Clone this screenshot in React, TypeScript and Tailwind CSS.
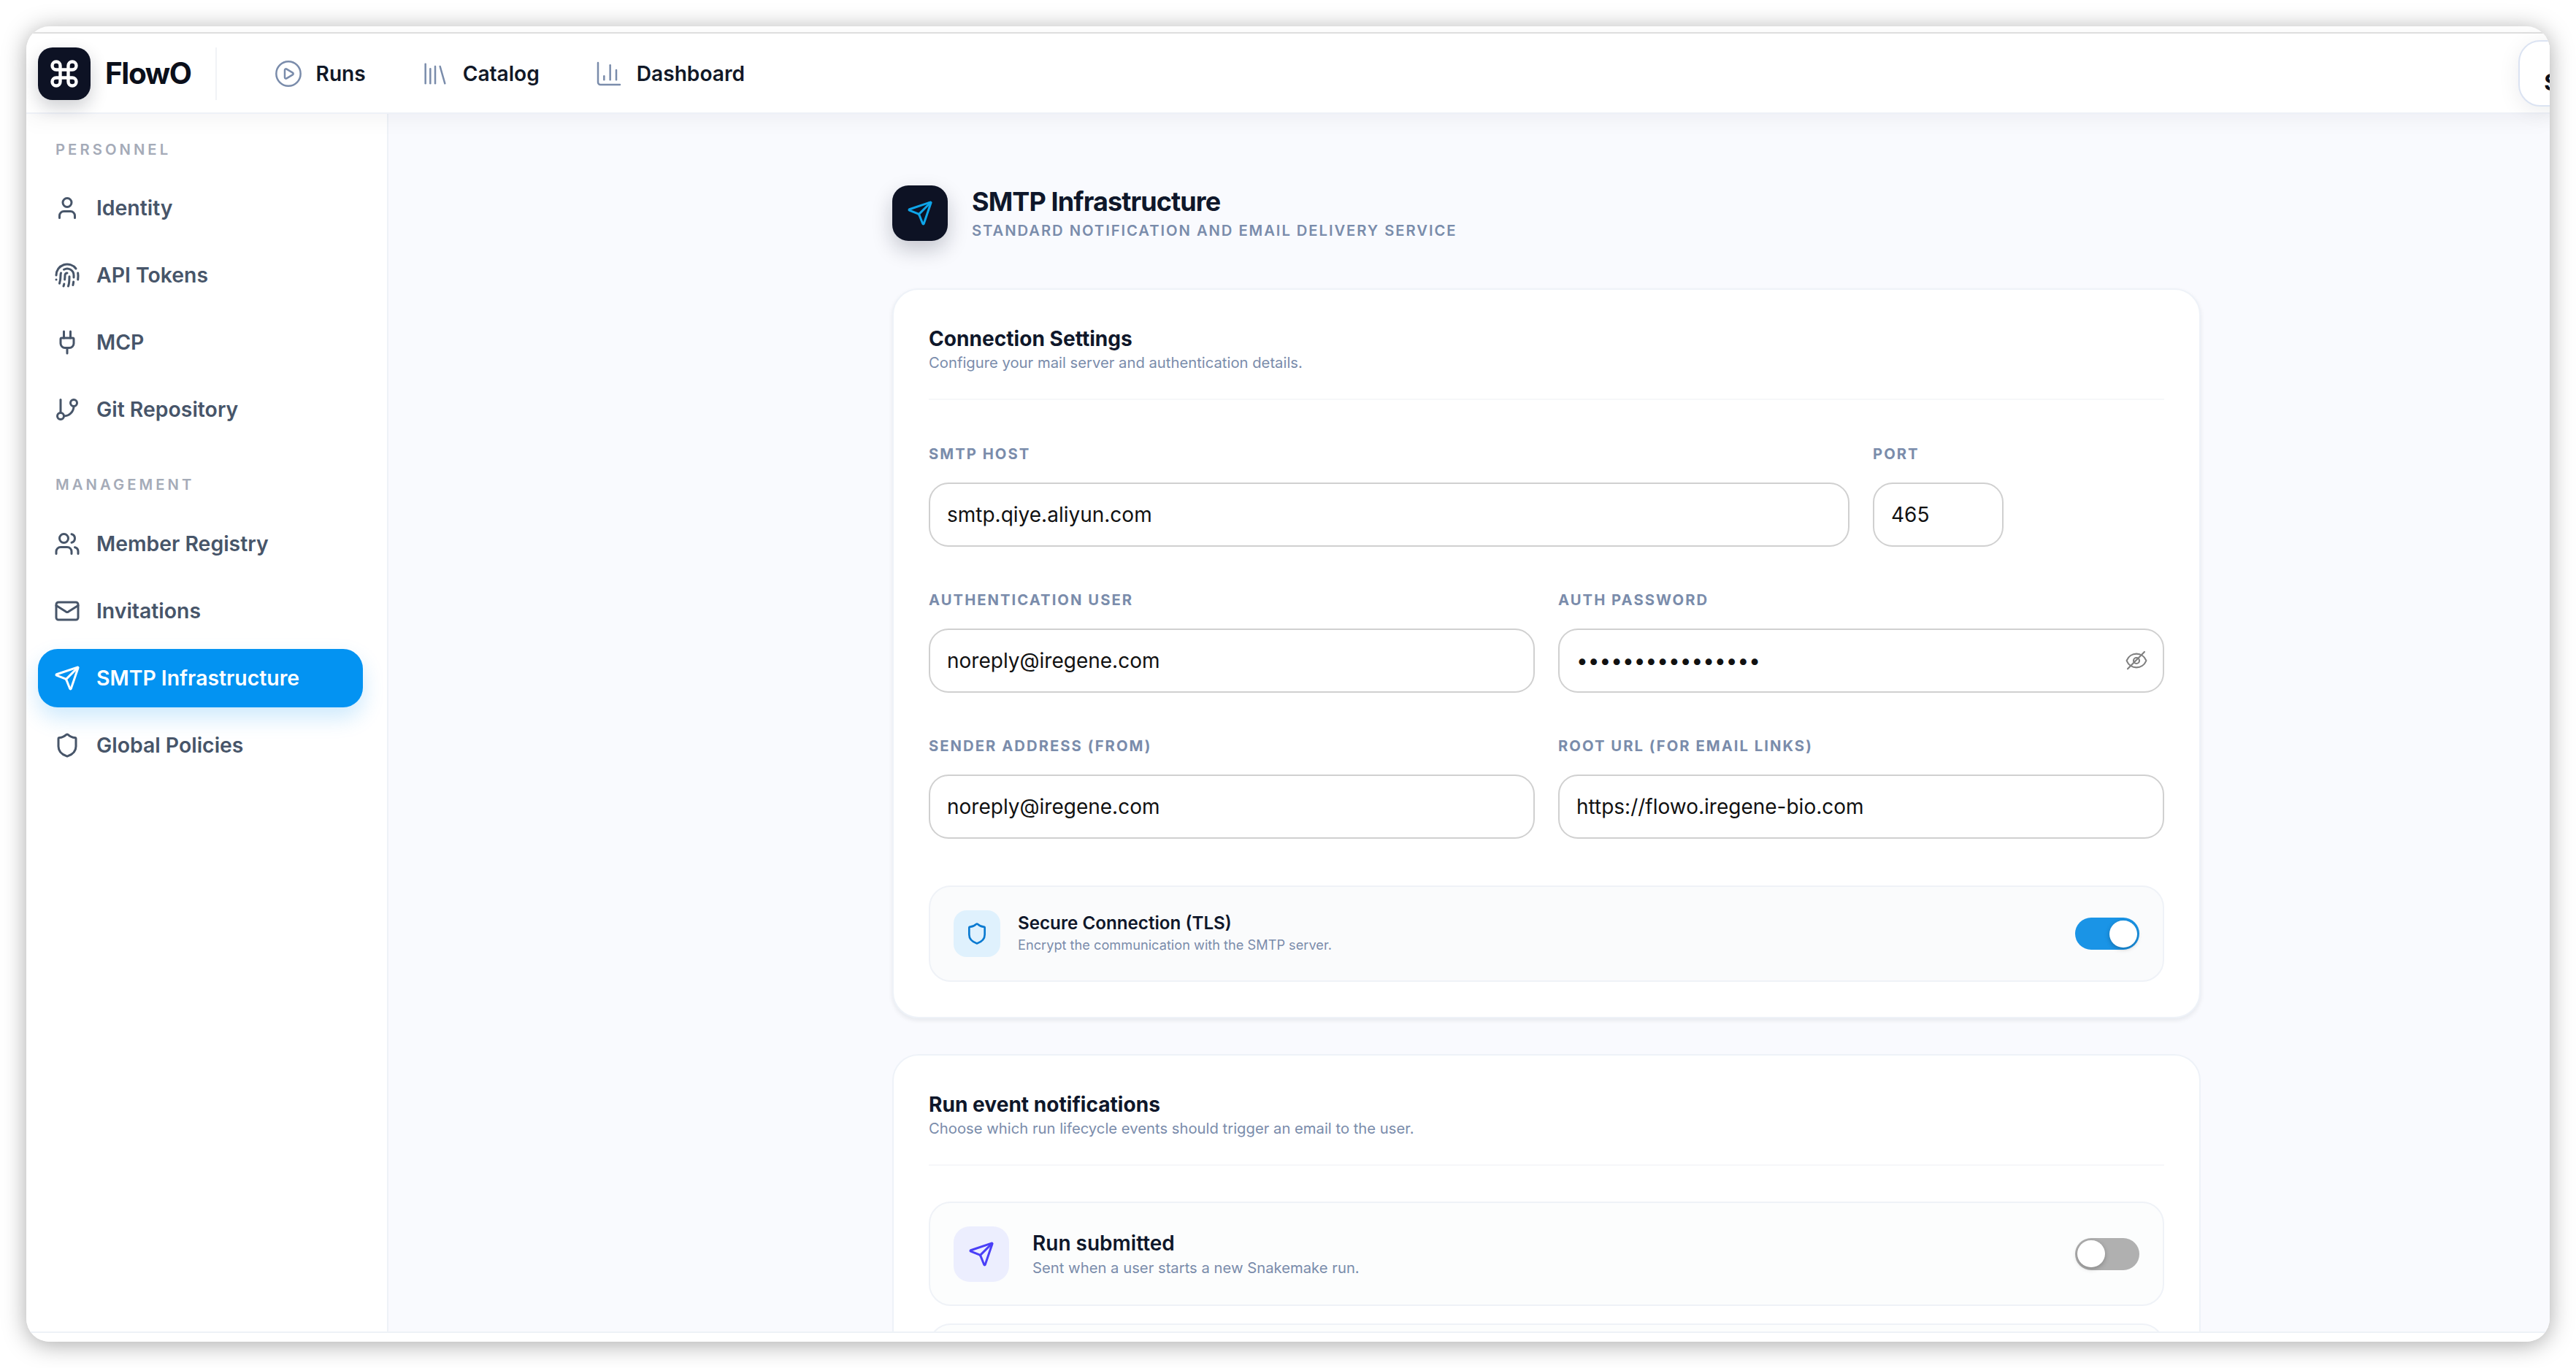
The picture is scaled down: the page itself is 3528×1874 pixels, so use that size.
import {
  ChartColumn,
  CirclePlay,
  Command,
  Fingerprint,
  GitBranch,
  Library,
  Mail,
  Plug,
  Send,
  Shield,
  User,
  Users,
} from "lucide-react";

const personnel = [
  { label: "Identity", icon: User },
  { label: "API Tokens", icon: Fingerprint },
  { label: "MCP", icon: Plug },
  { label: "Git Repository", icon: GitBranch },
];

const management = [
  { label: "Member Registry", icon: Users },
  { label: "Invitations", icon: Mail },
  { label: "SMTP Infrastructure", icon: Send, active: true },
  { label: "Global Policies", icon: Shield },
];

function NavItem({ label, icon: Icon, active }: { label: string; icon: any; active?: boolean }) {
  return (
    <div
      className={
        active
          ? "flex h-[80px] items-center gap-[22px] rounded-[27px] bg-[#0393f2] px-[22px] text-[28.4px] font-semibold text-white shadow-[0_14px_30px_rgba(3,147,242,0.2)]"
          : "flex h-[80px] items-center gap-[22px] rounded-[27px] px-[22px] text-[28.4px] font-semibold text-[#475569]"
      }
    >
      <Icon className="h-[36px] w-[36px]" strokeWidth={2} />
      <span>{label}</span>
    </div>
  );
}

function EyeSlash() {
  return (
    <svg viewBox="0 0 24 24" fill="none" stroke="currentColor" strokeWidth={1.6} strokeLinecap="round" strokeLinejoin="round" className="-mr-[3px] h-[32px] w-[32px] text-[#808080]">
      <path d="M2.062 12.348a1 1 0 0 1 0-.696 10.75 10.75 0 0 1 19.876 0 1 1 0 0 1 0 .696 10.75 10.75 0 0 1-19.876 0" />
      <circle cx="12" cy="12" r="3" />
      <path d="M20.2 3 3 20.5" />
    </svg>
  );
}

function Field({ label, value, className, eye }: { label: string; value: string; className?: string; eye?: boolean }) {
  return (
    <div className={className}>
      <div className="mb-[27px] text-[20.25px] leading-[24px] font-bold tracking-[0.1em] text-[#7a8cab] uppercase">{label}</div>
      <div className="flex h-[88px] items-center justify-between rounded-[27px] border-2 border-[#d0d0d0] bg-white px-[23px] text-[28px] text-[#111111]">
        <span>{value}</span>
        {eye && <EyeSlash />}
      </div>
    </div>
  );
}

function Toggle({ on }: { on?: boolean }) {
  return (
    <div
      className={
        on
          ? "flex h-[44px] w-[88px] items-center justify-end rounded-full bg-[#1a94e6] px-[3px]"
          : "flex h-[44px] w-[88px] items-center justify-start rounded-full bg-[#b0b0b0] px-[3px]"
      }
    >
      <div className="h-[37px] w-[38px] rounded-full bg-white shadow-[0_2px_6px_rgba(0,0,0,0.25)]" />
    </div>
  );
}

function CardTitle({ title, sub }: { title: string; sub: string }) {
  return (
    <div className="border-b-2 border-[#f6f7f9] pb-[35px]">
      <h2 className="text-[28.1px] leading-[38px] font-bold text-[#0f172a]">{title}</h2>
      <p className="text-[20.25px] leading-[28px] text-[#7a8cab]">{sub}</p>
    </div>
  );
}

export default function App() {
  return (
    <div className="h-screen w-full overflow-hidden bg-white p-[36px] font-['Inter',sans-serif]">
      <div className="flex h-[1802px] flex-col overflow-hidden rounded-[32px] bg-white shadow-[0_4px_32px_rgba(0,0,0,0.34)]">
        <div className="h-[10px] shrink-0 border-b-2 border-[#e2e2e2]" />

        {/* Top bar */}
        <header className="relative z-10 flex h-[110px] shrink-0 items-center border-b-2 border-[#eef1f7] bg-white pt-[2px] pl-[16px] shadow-[0_6px_30px_rgba(15,23,42,0.05)]">
          <div className="flex h-[72px] items-center gap-[20px] border-r-2 border-[#f1f3f6] pr-[33px]">
            <div className="flex h-[72px] w-[72px] items-center justify-center rounded-[20px] bg-[#0d1224] shadow-[0_10px_24px_rgba(13,18,36,0.2)]">
              <Command className="h-[44px] w-[44px] text-white" strokeWidth={2.4} />
            </div>
            <span className="text-[40.5px] font-bold tracking-[-0.035em] text-[#0b0f1a]">FlowO</span>
          </div>
          <nav className="ml-[78px] flex items-center gap-[75px] text-[28.1px] font-semibold text-[#111827]">
            <div className="flex items-center gap-[18px]">
              <CirclePlay className="h-[40px] w-[40px] text-[#7a8cab]" strokeWidth={1.5} />
              <span>Runs</span>
            </div>
            <div className="flex items-center gap-[18px]">
              <Library className="h-[40px] w-[40px] text-[#7a8cab]" strokeWidth={1.5} />
              <span>Catalog</span>
            </div>
            <div className="flex items-center gap-[18px]">
              <ChartColumn className="h-[40px] w-[40px] text-[#7a8cab]" strokeWidth={1.5} />
              <span>Dashboard</span>
            </div>
          </nav>
          <div className="absolute top-[9px] left-[3413px] flex h-[91px] w-[91px] items-center justify-center rounded-[30px] border-2 border-[#dbe3f2] bg-white text-[31.5px] font-bold text-[#0b0f1a] shadow-[0_6px_30px_rgba(15,23,42,0.08)]">
            <span className="translate-y-[12px]">S</span>
          </div>
        </header>

        <div className="flex min-h-0 flex-1">
          {/* Sidebar */}
          <aside className="w-[496px] shrink-0 border-r-2 border-[#eef2f7] bg-white pt-[34px] pr-[33px] pl-[16px]">
            <div className="px-[24px] text-[20.25px] leading-[30px] font-semibold tracking-[0.2em] text-[#a5abb8]">PERSONNEL</div>
            <div className="mt-[25px] flex flex-col gap-[12px]">
              {personnel.map((item) => (
                <NavItem key={item.label} {...item} />
              ))}
            </div>
            <div className="mt-[48px] px-[24px] text-[20.25px] leading-[30px] font-semibold tracking-[0.2em] text-[#a5abb8]">MANAGEMENT</div>
            <div className="mt-[26px] flex flex-col gap-[12px]">
              {management.map((item) => (
                <NavItem key={item.label} {...item} />
              ))}
            </div>
          </aside>

          {/* Main content */}
          <main className="min-w-0 flex-1 overflow-hidden bg-[#f9fafe] pt-[98px] pl-[690px]">
            <div className="w-[1792px]">
              <div className="flex items-center gap-[33px]">
                <div className="flex h-[76px] w-[76px] items-center justify-center rounded-[22px] bg-[#0d1224] shadow-[0_12px_28px_rgba(13,18,36,0.22)]">
                  <Send className="h-[36px] w-[36px] text-[#0ea5e9]" strokeWidth={2} />
                </div>
                <div>
                  <h1 className="text-[36px] leading-[44px] font-bold tracking-[-0.025em] text-[#0f172a]">SMTP Infrastructure</h1>
                  <p className="mt-[4px] text-[20.25px] leading-[28px] font-semibold tracking-[0.095em] text-[#7a8cab] uppercase">Standard notification and email delivery service</p>
                </div>
              </div>

              <section className="mt-[65px] rounded-[36px] border-2 border-[#eef2f8] bg-white p-[48px] shadow-[0_3px_6px_rgba(15,23,42,0.08)]">
                <CardTitle title="Connection Settings" sub="Configure your mail server and authentication details." />
                <div className="mt-[62px] flex gap-[32px]">
                  <Field className="w-[1261px]" label="SMTP Host" value="smtp.qiye.aliyun.com" />
                  <Field className="w-[179px]" label="Port" value="465" />
                </div>
                <div className="mt-[61px] grid grid-cols-2 gap-x-[32px] gap-y-[61px]">
                  <Field label="Authentication User" value="noreply@iregene.com" />
                  <Field label="Auth Password" value="••••••••••••••••" eye />
                  <Field label="Sender Address (From)" value="noreply@iregene.com" />
                  <Field label="Root URL (for email links)" value="https://flowo.iregene-bio.com" />
                </div>
                <div className="mt-[64px] flex h-[132px] items-center justify-between rounded-[30px] border-2 border-[#eff2f7] bg-[#fafbfc] pr-[32px] pl-[32px]">
                  <div className="flex items-center gap-[24px]">
                    <div className="flex h-[64px] w-[64px] items-center justify-center rounded-[18px] bg-[#dff1fd]">
                      <Shield className="h-[32px] w-[32px] text-[#0a7ad1]" strokeWidth={2} />
                    </div>
                    <div>
                      <div className="text-[24.2px] leading-[30px] font-semibold text-[#0f172a]">Secure Connection (TLS)</div>
                      <div className="text-[18.2px] leading-[28px] text-[#7a8cab]">Encrypt the communication with the SMTP server.</div>
                    </div>
                  </div>
                  <Toggle on />
                </div>
              </section>

              <section className="mt-[49px] rounded-[36px] border-2 border-[#eef2f8] bg-white p-[48px]">
                <CardTitle title="Run event notifications" sub="Choose which run lifecycle events should trigger an email to the user." />
                <div className="mt-[49px] flex h-[143px] items-center justify-between rounded-[30px] border-2 border-[#eff2f7] bg-[#fcfdfd] px-[32px]">
                  <div className="flex items-center gap-[32px]">
                    <div className="flex h-[76px] w-[76px] items-center justify-center rounded-[22px] bg-[#eceefe]">
                      <Send className="h-[36px] w-[36px] text-[#4a3ff7]" strokeWidth={2} />
                    </div>
                    <div className="pt-[2px]">
                      <div className="text-[28px] leading-[36px] font-semibold text-[#0f172a]">Run submitted</div>
                      <div className="text-[20.25px] leading-[32px] text-[#7a8cab]">Sent when a user starts a new Snakemake run.</div>
                    </div>
                  </div>
                  <Toggle />
                </div>
                <div className="mt-[24px] h-[143px] rounded-[30px] border-2 border-[#eff2f7] bg-[#fcfdfd]" />
              </section>
            </div>
          </main>
        </div>

        <div className="relative z-10 h-[14px] shrink-0 border-t-2 border-[#eef2f7] bg-white" />
      </div>
    </div>
  );
}
